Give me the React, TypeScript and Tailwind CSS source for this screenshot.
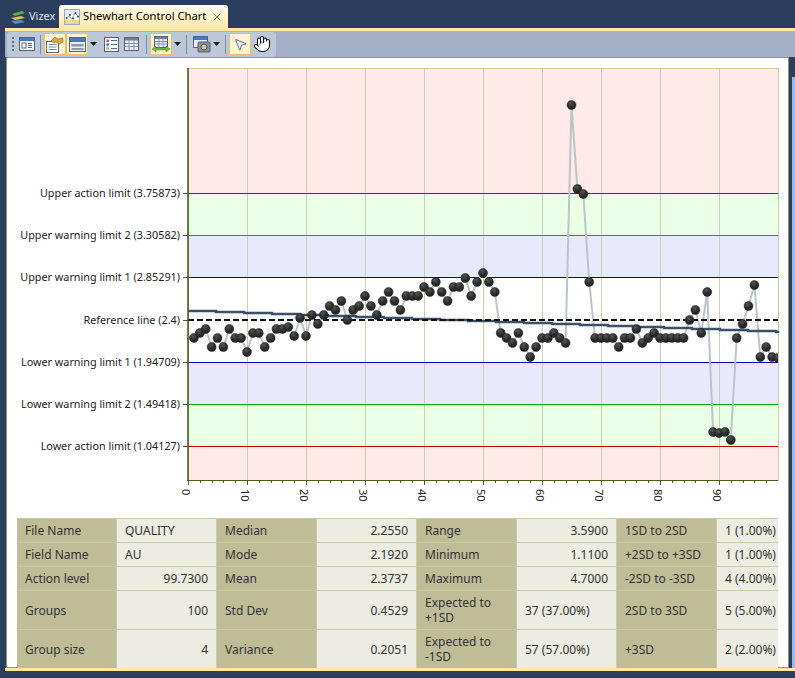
import { Hand, MousePointer2, X } from "lucide-react";

const FONT = "font-['Noto_Sans','Liberation_Sans',sans-serif]";

// zoomed pixel rows of the points, i = 1..100
const YS: number[] = [
  338, 333, 329, 347, 338, 347, 329, 338, 338, 352, 333, 333, 347, 338, 329, 329, 327, 336, 318, 336,
  315, 324, 315, 306, 310, 301, 320, 310, 306, 296, 306, 315, 301, 292, 301, 310, 296, 296, 296, 287,
  292, 282, 292, 301, 287, 287, 278, 296, 282, 273, 282, 292, 333, 338, 343, 333, 347, 357, 347, 338,
  338, 333, 338, 343, 105, 189, 194, 282, 338, 338, 338, 338, 347, 338, 338, 329, 343, 338, 333, 338,
  338, 338, 338, 338, 320, 310, 333, 292, 432, 433, 432, 440, 338, 324, 306, 285, 357, 347, 357, 358,
];

const px = (i: number) => 188 + i * 5.9;

const LIMITS = [
  { label: "Upper action limit (3.75873)", y: 193, color: "#c00000" },
  { label: "Upper warning limit 2 (3.30582)", y: 235, color: "#00b000" },
  { label: "Upper warning limit 1 (2.85291)", y: 277, color: "#0000b0" },
  { label: "Reference line (2.4)", y: 320, color: "" },
  { label: "Lower warning limit 1 (1.94709)", y: 362, color: "#0000b0" },
  { label: "Lower warning limit 2 (1.49418)", y: 404, color: "#00b000" },
  { label: "Lower action limit (1.04127)", y: 446, color: "#c00000" },
];

const BANDS = [
  { y: 68, h: 125, fill: "#ffe9e9" },
  { y: 193, h: 42, fill: "#e9ffe6" },
  { y: 235, h: 42, fill: "#e8e9fd" },
  { y: 277, h: 85, fill: "#ffffff" },
  { y: 362, h: 42, fill: "#e8e9fd" },
  { y: 404, h: 42, fill: "#e9ffe6" },
  { y: 446, h: 34, fill: "#ffe9e9" },
];

const meanPath = () => {
  let d = "M188 311";
  for (let i = 1; i <= 21; i++) {
    d += ` H${188 + i * 28} V${311 + i}`;
  }
  return d + " H778 V333";
};

function Chart() {
  const line = YS.map((y, i) => `${px(i + 1).toFixed(1)},${y}`).join(" ");
  return (
    <svg viewBox="7 58 781 460" width={781} height={460} className="block">
      <defs>
        <radialGradient id="ball" cx="40%" cy="28%" r="75%">
          <stop offset="0%" stopColor="#555555" />
          <stop offset="50%" stopColor="#303030" />
          <stop offset="100%" stopColor="#1e1e1e" />
        </radialGradient>
      </defs>
      {BANDS.map(b => (
        <rect key={b.y} x={188} y={b.y} width={590} height={b.h} fill={b.fill} />
      ))}
      {[1, 2, 3, 4, 5, 6, 7, 8, 9].map(k => (
        <line key={k} x1={188 + k * 59 + 0.5} x2={188 + k * 59 + 0.5} y1={68} y2={480} stroke="#cfcfae" strokeWidth={1} />
      ))}
      <rect x={188.5} y={68.5} width={590} height={412} fill="none" stroke="#cbcb9f" strokeWidth={1} />
      {LIMITS.filter(l => l.color).map(l => (
        <line key={l.y} x1={188} x2={778} y1={l.y + 0.5} y2={l.y + 0.5} stroke={l.color} strokeWidth={1} />
      ))}
      <polyline points={line} fill="none" stroke="#bac5c7" strokeWidth={2} />
      <path d={meanPath()} fill="none" stroke="#3a5068" strokeWidth={2.4} />
      <line x1={188} x2={778} y1={320} y2={320} stroke="#111111" strokeWidth={2} strokeDasharray="6 3" />
      <svg x={188} y={68} width={590} height={414} viewBox="188 68 590 414">
        {YS.map((y, i) => (
          <circle key={i} cx={px(i + 1)} cy={y} r={4.5} fill="url(#ball)" stroke="#222222" strokeWidth={0.5} />
        ))}
      </svg>
      <line x1={188} x2={188} y1={68} y2={481} stroke="#4f5a24" strokeWidth={1.6} />
      <line x1={187} x2={778} y1={480.5} y2={480.5} stroke="#4f5a24" strokeWidth={1} />
      {Array.from({ length: 50 }, (_, i) => i).map(i => {
        const x = Math.round(188 + i * 11.8) + 0.5;
        return <line key={i} x1={x} x2={x} y1={480} y2={i % 5 === 0 ? 485 : 483} stroke="#4f5a24" strokeWidth={1} />;
      })}
      {LIMITS.map(l => (
        <g key={l.label}>
          <line x1={183} x2={188} y1={l.y + 0.5} y2={l.y + 0.5} stroke="#4f5a24" strokeWidth={1} />
          <text x={180} y={l.y + 4} textAnchor="end" fontSize={10.8} fill="#222222" fontFamily="'Noto Sans',sans-serif">
            {l.label}
          </text>
        </g>
      ))}
      {[0, 10, 20, 30, 40, 50, 60, 70, 80, 90].map(n => {
        const x = 188 + n * 5.9;
        return (
          <text
            key={n}
            transform={`translate(${x - 6} 489) rotate(90)`}
            fontSize={11}
            fill="#222222"
            fontFamily="'Noto Sans',sans-serif"
          >
            {n}
          </text>
        );
      })}
    </svg>
  );
}

const ROWS: { h: string; cells: [string, string, boolean?][] }[] = [
  { h: "h-[24px]", cells: [["File Name", "QUALITY"], ["Median", "2.2550", true], ["Range", "3.5900", true], ["1SD to 2SD", "1 (1.00%)"]] },
  { h: "h-[24px]", cells: [["Field Name", "AU"], ["Mode", "2.1920", true], ["Minimum", "1.1100", true], ["+2SD to +3SD", "1 (1.00%)"]] },
  { h: "h-[24px]", cells: [["Action level", "99.7300", true], ["Mean", "2.3737", true], ["Maximum", "4.7000", true], ["-2SD to -3SD", "4 (4.00%)"]] },
  { h: "h-[39px]", cells: [["Groups", "100", true], ["Std Dev", "0.4529", true], ["Expected to +1SD", "37 (37.00%)"], ["2SD to 3SD", "5 (5.00%)"]] },
  { h: "h-[38px]", cells: [["Group size", "4", true], ["Variance", "0.2051", true], ["Expected to -1SD", "57 (57.00%)"], ["+3SD", "2 (2.00%)"]] },
];

function StatsTable() {
  return (
    <div className={`ml-[10px] w-[761px] overflow-hidden border-t border-[#c6caa6] text-[12px] leading-[15px] text-[#333333] ${FONT}`}>
      {ROWS.map((row, r) => (
        <div key={r} className={`flex w-[810px] ${row.h} ${r < 4 ? "border-b border-[#c6caa6]" : ""}`}>
          {row.cells.map(([label, value, right]) => (
            <div key={label} className="flex w-[200px] shrink-0">
              <div className="flex w-[100px] items-center border-r border-[#c6caa6] bg-[#bfbd98] pl-2 pr-1">{label}</div>
              <div className={`flex w-[100px] items-center whitespace-nowrap border-r border-[#c6caa6] bg-[#ecece2] pl-2 pr-2 ${right ? "justify-end" : ""}`}>
                {value}
              </div>
            </div>
          ))}
        </div>
      ))}
    </div>
  );
}

const Caret = ({ className }: { className: string }) => (
  <svg width="7" height="4" viewBox="0 0 7 4" className={`shrink-0 ${className}`}>
    <path d="M0 0h7L3.5 4z" fill="#1c1c1c" />
  </svg>
);

const Sep = ({ className = "ml-[4px]" }: { className?: string }) => (
  <div className={`mr-[3px] h-[19px] w-px shrink-0 bg-[#7d8ba5] ${className}`} />
);

function ToolBtn({ active, w = "w-[22px]", children }: { active?: boolean; w?: string; children: React.ReactNode }) {
  return (
    <div
      className={`flex h-[22px] ${w} shrink-0 items-center justify-center ${
        active ? "border border-[#e8c06a] bg-[#fff3d0]" : ""
      }`}
    >
      {children}
    </div>
  );
}

const PanelIcon = () => (
  <svg width="16" height="14" viewBox="0 0 16 14">
    <rect x=".5" y=".5" width="15" height="13" fill="#f4f6fa" stroke="#4d6382" />
    <rect x="1" y="1" width="14" height="3" fill="#4a78b8" />
    <rect x="3" y="6" width="4" height="5" fill="#fff" stroke="#5a6a82" />
    <path d="M9 6.5h4M9 8.5h4M9 10.5h4" stroke="#5a6a82" />
  </svg>
);

const HandshakeDocIcon = () => (
  <svg width="18" height="17" viewBox="0 0 18 17">
    <rect x=".5" y="5.5" width="12" height="11" fill="#fdfdfd" stroke="#5a6a82" />
    <path d="M2.5 8.5h8M2.5 11h8M2.5 13.5h8" stroke="#7a8aa2" />
    <path d="M5 5l4-4 3 2 5-1v4l-4 2-3-2-2 1z" fill="#d9a93c" stroke="#8b6a1e" strokeWidth=".6" />
  </svg>
);

const FormIcon = () => (
  <svg width="17" height="15" viewBox="0 0 17 15">
    <rect x=".5" y=".5" width="16" height="14" fill="#e8ecf3" stroke="#55657f" />
    <rect x="1" y="1" width="15" height="4" fill="#4a78b8" />
    <rect x="2.5" y="7" width="12" height="2.5" fill="#8d99ab" />
    <rect x="2.5" y="11" width="12" height="2" fill="#8d99ab" />
  </svg>
);

const ListIcon = () => (
  <svg width="15" height="15" viewBox="0 0 15 15">
    <rect x=".5" y=".5" width="14" height="14" fill="#f6f8fc" stroke="#55657f" />
    <rect x="2.5" y="2.5" width="2.5" height="2.5" fill="#d84a3a" />
    <rect x="2.5" y="6.3" width="2.5" height="2.5" fill="#3a6ed8" />
    <rect x="2.5" y="10" width="2.5" height="2.5" fill="#e0a82e" />
    <path d="M7 3.5h6M7 7.5h6M7 11.5h6" stroke="#5a6a82" />
  </svg>
);

const GridIcon = () => (
  <svg width="15" height="14" viewBox="0 0 15 14">
    <rect x=".5" y=".5" width="14" height="13" fill="#eef1f6" stroke="#55657f" />
    <rect x="1" y="1" width="13" height="2.5" fill="#6f7f98" />
    <path d="M1 6.5h13M1 9.5h13M5 3v10M10 3v10" stroke="#8794a8" />
  </svg>
);

const FitIcon = () => (
  <svg width="18" height="17" viewBox="0 0 18 17">
    <rect x="2.5" y=".5" width="13" height="11" fill="#eef1f6" stroke="#55657f" />
    <rect x="3" y="1" width="12" height="2" fill="#6f7f98" />
    <path d="M3 5.5h12M3 8h12M7 3v8M11 3v8" stroke="#8794a8" />
    <path d="M0 13l4-3v2h10v-2l4 3-4 3v-2H4v2z" fill="#77b83c" stroke="#4d8a20" strokeWidth=".5" />
  </svg>
);

const CameraIcon = () => (
  <svg width="18" height="17" viewBox="0 0 18 17">
    <rect x=".5" y=".5" width="14" height="11" fill="#f0f3f8" stroke="#55657f" />
    <rect x="1" y="1" width="13" height="3" fill="#3f78c8" />
    <rect x="5" y="6" width="12" height="10" rx="1" fill="#8f8f8f" stroke="#5c5c5c" />
    <circle cx="11" cy="11" r="3" fill="#c4c4c4" stroke="#555555" />
  </svg>
);

const TabChartIcon = () => (
  <svg width="16" height="16" viewBox="0 0 16 16" className="shrink-0">
    <rect x=".5" y=".5" width="15" height="15" fill="#fff" stroke="#a0a8b4" />
    <rect x="1" y="1" width="14" height="5" fill="#e9ecf4" />
    <rect x="1" y="11" width="14" height="4" fill="#f9cf9c" />
    <path d="M2 9l3-2 3 3 3-6 3 3" fill="none" stroke="#9aa6b0" />
    <g fill="#33415a">
      <circle cx="2.5" cy="9" r="1" />
      <circle cx="6" cy="6" r="1" />
      <circle cx="9" cy="9.5" r="1" />
      <circle cx="11.5" cy="4" r="1" />
      <circle cx="14" cy="7.5" r="1" />
    </g>
  </svg>
);

const VizexIcon = () => (
  <svg width="16" height="14" viewBox="0 0 16 14" className="shrink-0">
    <path d="M1 11l10-1 4 2-10 2z" fill="#4a90d8" />
    <path d="M1 8l10-2 4 2-10 2z" fill="#e8c23c" />
    <path d="M2 4l10-3 3 2-10 3z" fill="#5fb04a" />
  </svg>
);

function Toolbar() {
  return (
    <div className="flex h-[26px] items-center bg-[#a3b0c8] pl-[2px]">
      <div className="flex h-[25px] w-[269px] items-center rounded-[3px] bg-[#bcc7d8] pl-[5px]">
        <div className="mr-[2px] flex h-[15px] w-[3px] shrink-0 flex-col justify-between">
          <div className="h-[2px] w-[2px] bg-[#5d6b85]" />
          <div className="h-[2px] w-[2px] bg-[#5d6b85]" />
          <div className="h-[2px] w-[2px] bg-[#5d6b85]" />
          <div className="h-[2px] w-[2px] bg-[#5d6b85]" />
        </div>
        <ToolBtn w="w-[19px]"><PanelIcon /></ToolBtn>
        <Sep />
        <ToolBtn active><HandshakeDocIcon /></ToolBtn>
        <ToolBtn active><FormIcon /></ToolBtn>
        <Caret className="ml-[2px] mr-[4px]" />
        <ToolBtn w="w-[20px]"><ListIcon /></ToolBtn>
        <ToolBtn w="w-[21px]"><GridIcon /></ToolBtn>
        <Sep />
        <ToolBtn active><FitIcon /></ToolBtn>
        <Caret className="ml-[2px] mr-[5px]" />
        <Sep className="ml-0" />
        <ToolBtn w="w-[23px]"><CameraIcon /></ToolBtn>
        <Caret className="mr-[5px]" />
        <Sep className="ml-0" />
        <ToolBtn active>
          <MousePointer2 size={15} strokeWidth={1.2} color="#34507a" fill="#e4ebf6" />
        </ToolBtn>
        <ToolBtn>
          <Hand size={18} strokeWidth={1.4} color="#111111" fill="#ffffff" />
        </ToolBtn>
      </div>
    </div>
  );
}

export default function App() {
  return (
    <div className={`flex h-[678px] w-[795px] flex-col overflow-hidden bg-[#2c3e5e] ${FONT}`}>
      <div className="flex h-[28px] shrink-0 items-end pl-[10px]">
        <div className="flex h-[23px] w-[49px] items-center gap-[3px] text-[11px] text-[#dfe6f0]">
          <VizexIcon />
          <span>Vizex</span>
        </div>
        <div className="flex h-[23px] w-[169px] items-center rounded-t-[3px] bg-gradient-to-b from-[#fffdf0] to-[#ffe8a6] pl-[5px] text-[11.2px] text-black">
          <TabChartIcon />
          <span className="ml-[3px] whitespace-nowrap">Shewhart Control Chart</span>
          <X size={12} strokeWidth={1.6} color="#555555" className="ml-[5px] shrink-0" />
        </div>
      </div>
      <div className="ml-[5px] flex h-[643px] shrink-0 flex-col">
        <div className="h-[3px] shrink-0 bg-[#ffe8a6]" />
        <Toolbar />
        <div className="flex h-[611px] shrink-0 pl-px">
          <div className="h-[611px] w-[783px] shrink-0 border border-[#8f9a68] bg-white">
            <Chart />
            <StatsTable />
          </div>
          <div className="flex h-[611px] flex-1 flex-col bg-[#2c3e5e] pl-[3px]">
            <div className="mt-[20px] flex-1 bg-[#98b9e8]" />
          </div>
        </div>
        <div className="h-[3px] shrink-0 bg-[#ffe8a6]" />
      </div>
    </div>
  );
}
